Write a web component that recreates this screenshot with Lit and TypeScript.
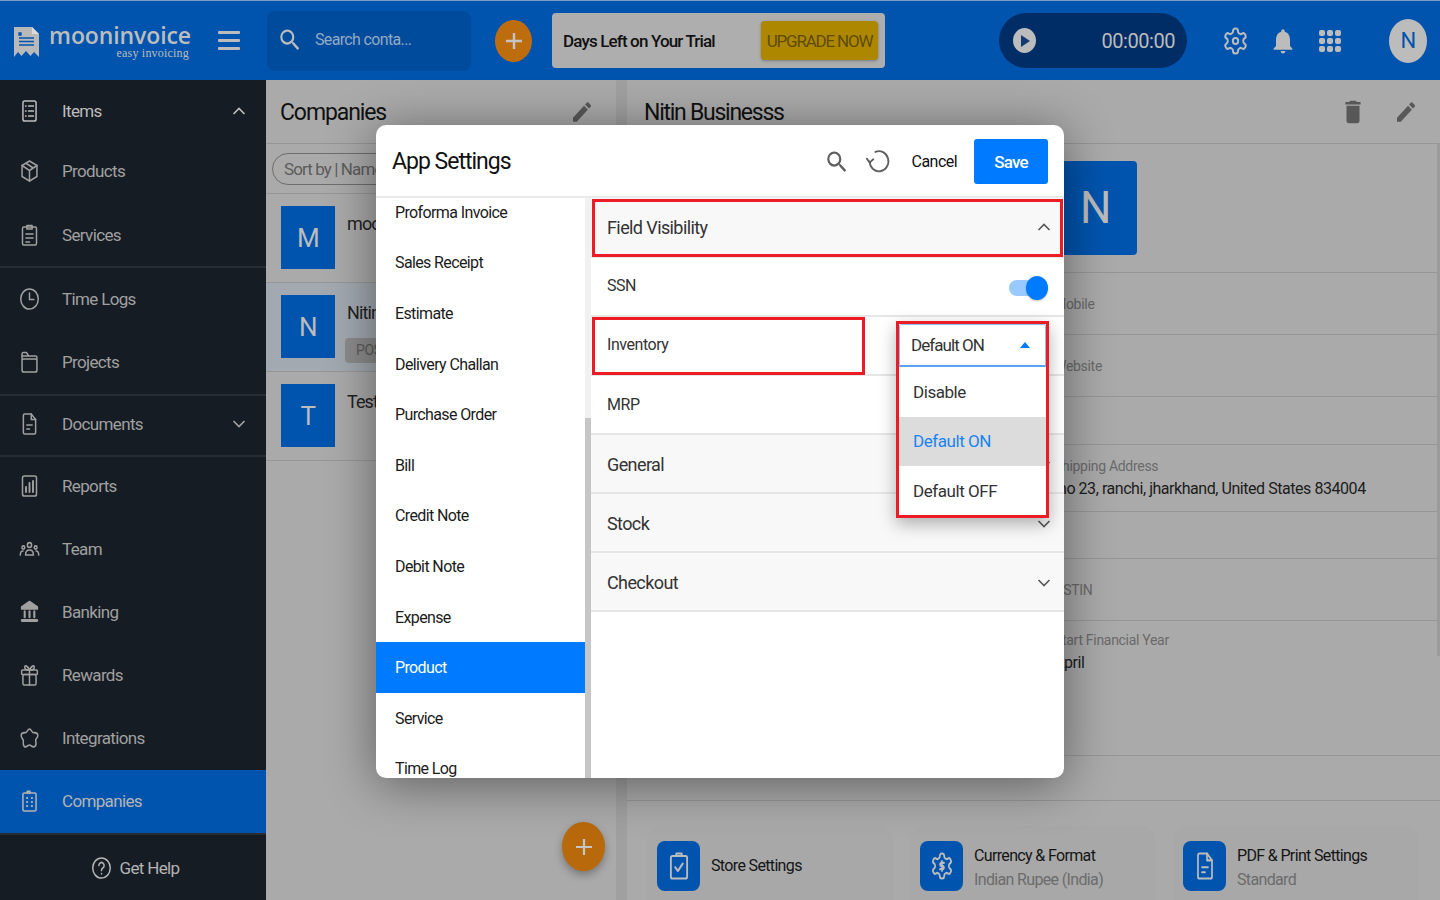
import { LitElement, html, css, svg } from 'lit';
import { customElement } from 'lit/decorators.js';

const line = (body: unknown, w = 24, h = 24) => html`
  <svg width=${w} height=${h} viewBox="0 0 24 24" preserveAspectRatio="none" fill="none" stroke="currentColor"
    stroke-width="1.7" stroke-linecap="round" stroke-linejoin="round">${body}</svg>`;

const solid = (d: string, w = 24, h = 24) => html`
  <svg width=${w} height=${h} viewBox="0 0 24 24" preserveAspectRatio="none" fill="currentColor"><path d=${d}></path></svg>`;

const SEARCH = 'M15.5 14h-.79l-.28-.27A6.471 6.471 0 0 0 16 9.5 6.5 6.5 0 1 0 9.5 16c1.61 0 3.09-.59 4.23-1.57l.27.28v.79l5 4.99L20.49 19l-4.99-5zm-6 0C7.01 14 5 11.99 5 9.5S7.01 5 9.5 5 14 7.01 14 9.5 11.99 14 9.5 14z';
const EDIT = 'M3 17.25V21h3.75L17.81 9.94l-3.75-3.75L3 17.25zM20.71 7.04a1 1 0 0 0 0-1.41l-2.34-2.34a1 1 0 0 0-1.41 0l-1.83 1.83 3.75 3.75 1.83-1.83z';
const TRASH = 'M6 19c0 1.1.9 2 2 2h8c1.1 0 2-.9 2-2V7H6v12zM19 4h-3.5l-1-1h-5l-1 1H5v2h14V4z';
const BELL = 'M12 22c1.1 0 2-.9 2-2h-4c0 1.1.9 2 2 2zm6-6v-5c0-3.07-1.63-5.64-4.5-6.32V4c0-.83-.67-1.5-1.5-1.5s-1.5.67-1.5 1.5v.68C7.64 5.36 6 7.92 6 11v5l-2 2v1h16v-1l-2-2z';
const GEAR_PATH = svg`<path d="M12.22 2h-.44a2 2 0 0 0-2 2v.18a2 2 0 0 1-1 1.73l-.43.25a2 2 0 0 1-2 0l-.15-.08a2 2 0 0 0-2.73.73l-.22.38a2 2 0 0 0 .73 2.73l.15.1a2 2 0 0 1 1 1.72v.51a2 2 0 0 1-1 1.74l-.15.09a2 2 0 0 0-.73 2.73l.22.38a2 2 0 0 0 2.73.73l.15-.08a2 2 0 0 1 2 0l.43.25a2 2 0 0 1 1 1.73V20a2 2 0 0 0 2 2h.44a2 2 0 0 0 2-2v-.18a2 2 0 0 1 1-1.73l.43-.25a2 2 0 0 1 2 0l.15.08a2 2 0 0 0 2.73-.73l.22-.39a2 2 0 0 0-.73-2.73l-.15-.08a2 2 0 0 1-1-1.74v-.5a2 2 0 0 1 1-1.74l.15-.09a2 2 0 0 0 .73-2.73l-.22-.38a2 2 0 0 0-2.73-.73l-.15.08a2 2 0 0 1-2 0l-.43-.25a2 2 0 0 1-1-1.73V4a2 2 0 0 0-2-2z"></path>`;
const FILE_PATH = svg`<path d="M5 3.5A1.5 1.5 0 0 1 6.5 2H14l5 5.5v13a1.5 1.5 0 0 1-1.5 1.5h-11A1.5 1.5 0 0 1 5 20.5z"></path><path d="M14 2v5.5h5M9 13h6M9 17h3"></path>`;

const chevron = (up: boolean) => html`
  <svg class="chev" width="14" height="10" viewBox="0 0 14 10" fill="none" stroke="currentColor" stroke-width="1.7">
    <path d=${up ? 'M1.5 8 7 2.5 12.5 8' : 'M1.5 2 7 7.5 12.5 2'}></path>
  </svg>`;

const NAV_ICONS: Record<string, unknown> = {
  items: svg`<rect x="4.5" y="2" width="15" height="20" rx="2"></rect><path d="M11 7h5.5M11 12h5.5M11 17h5.5M7.5 7h.5M7.5 12h.5M7.5 17h.5"></path>`,
  products: svg`<path d="M12 2 3.5 6.5v11L12 22l8.5-4.5v-11L12 2z"></path><path d="M3.5 6.5 12 11.5l8.5-5M12 11.5V22M8 4.3l8.3 4.8"></path>`,
  services: svg`<rect x="4" y="4" width="16" height="18" rx="1.5"></rect><path d="M9 2.5h6V6H9zM8 11h8M8 15h8M8 19h4"></path>`,
  time: svg`<circle cx="12" cy="12" r="10"></circle><path d="M12 6v6.5h5"></path>`,
  projects: svg`<path d="M3.5 9V4A1.5 1.5 0 0 1 5 2.5h3.5L11 6h8a1.5 1.5 0 0 1 1.5 1.5V9"></path><rect x="3.5" y="9" width="17" height="13" rx="2"></rect><path d="M3.5 6h7"></path>`,
  documents: FILE_PATH,
  reports: svg`<rect x="4" y="2" width="16" height="20" rx="2"></rect><path d="M8 18v-5M12 18V9M16 18V7" stroke-width="2.2"></path>`,
  team: svg`<circle cx="12" cy="8" r="2.4"></circle><path d="M7.5 18c0-3 1.8-5 4.5-5s4.5 2 4.5 5z"></path><circle cx="5" cy="10.5" r="1.6"></circle><circle cx="19" cy="10.5" r="1.6"></circle><path d="M1.5 18c0-2.5 1-4 3-4M22.5 18c0-2.5-1-4-3-4"></path>`,
  banking: svg`<path d="M12 1.5 3 7v2h18V7z" fill="currentColor"></path><path d="M6.5 11.5V17M12 11.5V17M17.5 11.5V17" stroke-width="2.4"></path><path d="M3.5 20.5h17" stroke-width="2.8"></path>`,
  rewards: svg`<rect x="3" y="7" width="18" height="4.5" rx="1"></rect><rect x="4.5" y="11.5" width="15" height="10.5" rx="1.5"></rect><path d="M12 7v15M12 7C10 3 6.5 1.5 6.5 4.5 6.5 6.5 9 7 12 7zM12 7c2-4 5.5-5.5 5.5-2.5C17.5 6.5 15 7 12 7z"></path>`,
  integrations: svg`<path d="M12 3C14 3 14.5 6 16 6.5S21 6 21.5 9 18.5 12.5 19 14.5 20.5 19 18 20.5 14 19 12 19 8 22 6 20.5 5 16 5 14.5 2 12 2.5 9 6.5 7 8 6.5 10 3 12 3z"></path>`,
  companies: svg`<rect x="4.5" y="4" width="15" height="18" rx="1.5"></rect><path d="M9.5 4V2.5h3V4M9 9h.5M14.5 9h.5M9 13h.5M14.5 13h.5M9 17h.5M14.5 17h.5" stroke-width="2"></path>`,
};

const NAV = [
  [['Items', 'items', 'up', 'items bright'], ['Products', 'products', '', 'products'], ['Services', 'services', '', 'services']],
  [['Time Logs', 'time', '', ''], ['Projects', 'projects', '', '']],
  [['Documents', 'documents', 'down', 'documents']],
  [['Reports', 'reports', '', 'reports'], ['Team', 'team', '', ''], ['Banking', 'banking', '', ''], ['Rewards', 'rewards', '', ''], ['Integrations', 'integrations', '', ''], ['Companies', 'companies', '', 'active']],
];

const COMPANIES = [
  { letter: 'M', name: 'moon', active: false, badge: false },
  { letter: 'N', name: 'Nitin', active: true, badge: true },
  { letter: 'T', name: 'Test', active: false, badge: false },
];

const INVOICE_TYPES = ['Proforma Invoice', 'Sales Receipt', 'Estimate', 'Delivery Challan', 'Purchase Order', 'Bill', 'Credit Note', 'Debit Note', 'Expense', 'Product', 'Service', 'Time Log'];

@customElement('app-root')
export class AppRoot extends LitElement {
  static styles = css`
    :host {
      display: block;
      width: 1440px;
      height: 900px;
      overflow: hidden;
      position: relative;
      font-family: Roboto, "Liberation Sans", sans-serif;
      letter-spacing: -0.45px;
      background: #aaaaaa;
    }

    svg { display: block; flex: none; }

    /* top bar */
    .topbar {
      height: 79px;
      border-top: 1px solid #7d9cc4;
      background: #0054ae;
      display: flex;
      align-items: center;
      color: #bcbcbc;
    }
    .brand {
      width: 266px;
      flex: none;
      display: flex;
      align-items: center;
      box-sizing: border-box;
      padding-left: 13px;
    }
    .brand > svg { margin-top: 2px; }
    .wordmark { margin-left: 10px; width: 141px; display: flex; flex-direction: column; align-items: flex-end; flex: none; }
    .wordmark b {
      font: 600 23px/24px "Open Sans", sans-serif;
      letter-spacing: -0.1px;
      color: #bdbdbd;
    }
    .wordmark span {
      font: 12px/12px "Liberation Serif", serif;
      letter-spacing: 0.2px;
      margin-right: 2px;
    }
    .burger { margin-left: 27px; display: flex; flex-direction: column; gap: 5px; }
    .burger i { display: block; width: 22px; height: 3px; background: #bcbcbc; border-radius: 1px; }
    .search {
      width: 204px;
      height: 60px;
      margin-left: 1px;
      flex: none;
      background: #004b9c;
      border-radius: 8px;
      display: flex;
      align-items: center;
      gap: 12px;
      padding: 0 0 2px 10px;
      box-sizing: border-box;
      font-size: 16px;
      letter-spacing: -0.65px;
      color: #93a9c4;
    }
    .search svg { color: #bcbcbc; }
    .add {
      flex: none;
      width: 37px;
      height: 42px;
      border-radius: 50%;
      background: #bd6d0e;
      color: #c4c4c4;
      margin-left: 24px;
      display: flex;
      align-items: center;
      justify-content: center;
    }
    .trial {
      flex: none;
      width: 333px;
      height: 55px;
      margin-left: 20px;
      background: #aeaeae;
      border-radius: 4px;
      box-sizing: border-box;
      padding: 0 7px 0 11px;
      display: flex;
      align-items: center;
      justify-content: space-between;
      font-size: 17px;
      font-weight: 500;
      letter-spacing: -0.85px;
      color: #111;
    }
    .upgrade {
      width: 117px;
      height: 39px;
      background: #ae8700;
      border-radius: 4px;
      box-shadow: 0 1px 3px rgba(0, 0, 0, 0.3);
      font-size: 17px;
      font-weight: 400;
      color: #5e4c06;
      display: flex;
      align-items: center;
      justify-content: center;
      white-space: nowrap;
      letter-spacing: -1.2px;
    }
    .timer {
      flex: none;
      width: 188px;
      height: 55px;
      margin-left: 114px;
      background: #002d66;
      border-radius: 28px;
      box-sizing: border-box;
      padding: 0 12px 0 14px;
      display: flex;
      align-items: center;
      justify-content: space-between;
      font-size: 20px;
      color: #bcbcbc;
    }
    .play {
      width: 23px;
      height: 25px;
      border-radius: 50%;
      background: #bcbcbc;
      display: flex;
      align-items: center;
      justify-content: center;
      color: #123a70;
    }
    .tools { display: flex; align-items: center; margin-left: 35px; gap: 20px; }
    .dots { display: grid; grid-template-columns: repeat(3, 6px); grid-auto-rows: 6px; gap: 2px; margin-left: 2px; }
    .dots i { background: #bcbcbc; border-radius: 2px; }
    .avatar {
      flex: none;
      width: 38px;
      height: 44px;
      margin-left: 48px;
      border-radius: 50%;
      background: #bcbcbc;
      color: #0054ae;
      font-size: 22px;
      display: flex;
      align-items: center;
      justify-content: center;
    }

    .layout { display: flex; height: 820px; }

    /* sidebar */
    .sidebar {
      width: 266px;
      flex: none;
      background: #161c24;
      color: #a0a0a0;
      display: flex;
      flex-direction: column;
      font-size: 17px;
      letter-spacing: -0.65px;
    }
    .group { border-bottom: 2px solid #282d34; }
    .group:last-of-type { border-bottom: 0; }
    .nav { height: 63px; display: flex; align-items: center; padding: 0 20px 2px 19px; box-sizing: border-box; }
    .nav.bright { color: #bdbdbd; }
    .nav.items { height: 62px; padding-bottom: 0; }
    .nav.products { height: 59px; }
    .nav.services { height: 65px; padding-top: 3px; padding-bottom: 0; }
    .nav.documents { height: 59px; padding-bottom: 3px; }
    .nav.reports { height: 61px; padding-bottom: 3px; }
    .nav.active { background: #0054ae; color: #b4b4b4; }
    .nav svg.ic { margin-right: 22px; }
    .nav .chev { margin-left: auto; }
    .help { flex: 1; display: flex; align-items: center; justify-content: center; gap: 8px; color: #b4b4b4; padding: 1px 0 0 4px; }

    /* list column */
    .list { width: 350px; flex: none; background: #aaaaaa; }
    .pane-head { height: 63px; border-bottom: 1px solid #969696; display: flex; align-items: center; font-size: 23px; letter-spacing: -1.1px; color: #111; }
    .pane-head span { padding-top: 2px; }
    .list .pane-head { padding: 0 22px 0 14px; justify-content: space-between; }
    .pane-head svg { color: #585858; }
    .sort { height: 49px; border-bottom: 1px solid #969696; display: flex; align-items: center; padding-left: 6px; }
    .sort span { border: 1px solid #6e6e6e; border-radius: 16px; height: 32px; width: 200px; display: flex; align-items: center; padding-left: 11px; box-sizing: border-box; font-size: 17px; letter-spacing: -0.9px; color: #5c5c5c; }
    .company { height: 89px; border-bottom: 1px solid #969696; display: flex; padding: 12px 0 0 15px; box-sizing: border-box; gap: 12px; }
    .company.on { background: #a2a9b0; }
    .tile { width: 54px; height: 63px; background: #0054ae; color: #bcbcbc; font-size: 26px; display: flex; align-items: center; justify-content: center; flex: none; }
    .name { font-size: 18px; line-height: 22px; letter-spacing: -0.9px; color: #222; margin-top: 7px; }
    .pos { width: 60px; height: 25px; background: #8c8c8c; border-radius: 4px; margin-top: 14px; margin-left: -2px; padding-left: 11px; box-sizing: border-box; font-size: 14px; line-height: 25px; color: #5c5c5c; }
    .fab-slot { display: flex; justify-content: flex-end; padding: 361px 11px 0 0; }
    .fab { width: 43px; height: 49px; border-radius: 50%; background: #b8690b; color: #c6c6c6; display: flex; align-items: center; justify-content: center; box-shadow: 0 4px 8px rgba(0, 0, 0, 0.3); }

    .gutter { width: 11px; flex: none; background: #a0a0a0; }

    /* details */
    .details { flex: 1; background: #aaaaaa; position: relative; }
    .details .pane-head { padding: 0 22px 0 17px; gap: 28px; letter-spacing: -1.26px; }
    .details .pane-head span { margin-right: auto; }
    .thumb { position: absolute; right: 0; top: 63px; width: 3px; height: 513px; background: #9a9a9a; }
    .hero { height: 129px; box-sizing: border-box; border-bottom: 1px solid #969696; padding: 17px 0 0 427px; }
    .hero div { width: 83px; height: 94px; background: #0054ae; border-radius: 4px; color: #bcbcbc; font-size: 44px; display: flex; align-items: center; justify-content: center; }
    .info { border-bottom: 1px solid #969696; padding-left: 427px; box-sizing: border-box; display: flex; flex-direction: column; justify-content: center; font-size: 14px; letter-spacing: -0.3px; color: #6a6a6a; }
    .info b { font-weight: 400; font-size: 16px; letter-spacing: -0.45px; color: #1c1c1c; margin: 5px 0 0 4px; }
    .h62 { height: 62px; }
    .h48 { height: 48px; }
    .h67 { height: 67px; }
    .h47 { height: 47px; }
    .h135 { height: 135px; justify-content: flex-start; padding-top: 11px; }
    .h45 { height: 45px; }
    .h135 b { margin-left: 0; }
    .cards { display: flex; gap: 17px; padding: 25px 0 0 20px; }
    .card { width: 246px; height: 74px; background: #a8a8a8; border-radius: 16px 16px 0 0; padding: 15px 0 0 10px; box-sizing: border-box; display: flex; gap: 11px; font-size: 16px; letter-spacing: -0.65px; color: #151515; }
    .card-ic { width: 43px; height: 50px; background: #0054ae; border-radius: 8px; color: #bcbcbc; display: flex; align-items: center; justify-content: center; flex: none; }
    .card p { margin: 0; height: 50px; box-sizing: border-box; display: flex; flex-direction: column; justify-content: center; padding-top: 2px; }
    .card p.single { padding: 0 0 2px; }
    .card small { font-size: 16px; color: #6c6c6c; margin-top: 5px; }

    /* modal */
    .backdrop { position: absolute; inset: 0; display: flex; align-items: flex-start; justify-content: center; padding-top: 125px; box-sizing: border-box; }
    .modal {
      width: 688px;
      height: 653px;
      background: #fff;
      border-radius: 10px;
      box-shadow: 0 6px 50px rgba(0, 0, 0, 0.45);
      display: flex;
      flex-direction: column;
      overflow: hidden;
      color: #1b1b1b;
    }
    .modal-head { height: 73px; flex: none; display: flex; align-items: center; padding: 2px 16px 0; border-bottom: 2px solid #eaeaea; box-sizing: border-box; color: #111; }
    .modal-head h2 { margin: 0 auto 0 0; font-size: 23px; font-weight: 400; letter-spacing: -1px; }
    .modal-head svg { color: #5e5e5e; }
    .cancel { font-size: 16px; letter-spacing: -0.55px; margin: 0 17px 0 21px; }
    .reload { margin-left: 16px; }
    .save { width: 74px; height: 45px; background: #007bff; color: #fff; border-radius: 3px; display: flex; align-items: center; justify-content: center; font-size: 17px; font-weight: 500; letter-spacing: -0.8px; }
    .modal-body { flex: 1; display: flex; min-height: 0; }
    .types { width: 209px; flex: none; overflow: hidden; font-size: 16px; letter-spacing: -0.62px; }
    .types div { height: 50.6px; display: flex; align-items: center; padding-left: 19px; }
    .types div:first-child { margin-top: -11px; }
    .types .on { background: #007bff; color: #fff; }
    .scroll { width: 6px; flex: none; background: #f1f1f1; display: flex; align-items: flex-end; }
    .scroll i { display: block; width: 100%; height: 360px; background: #c6c6c6; }
    .fields { flex: 1; font-size: 16px; color: #333; }
    .acc, .field { display: flex; align-items: center; justify-content: space-between; box-sizing: border-box; padding: 0 13px 0 16px; border-bottom: 2px solid #e6e6e6; height: 59px; }
    .acc { padding-top: 2px; background: #f8f8f8; font-size: 18px; letter-spacing: -0.6px; color: #333; }
    .acc.first { height: 60px; padding-top: 0; }
    .field { background: #fff; position: relative; }
    .field.up { padding-bottom: 2px; }
    .acc svg { color: #5a5a5a; }
    .mark { outline: 3px solid #ed1c24; outline-offset: -4px; }
    .inv-mark { position: absolute; left: 1px; top: 0; width: 273px; height: 58px; border: 3px solid #ed1c24; box-sizing: border-box; }
    .toggle { width: 39px; height: 16px; margin: 4px 3px 0 0; background: #99caff; border-radius: 8px; display: flex; justify-content: flex-end; align-items: center; }
    .toggle i { width: 22px; height: 24px; background: #007bff; border-radius: 50%; box-shadow: 0 1px 2px rgba(0, 0, 0, 0.25); }
    .select {
      position: absolute;
      right: 15px;
      top: 4px;
      width: 153px;
      height: 197px;
      box-sizing: border-box;
      border: 3px solid #ed1c24;
      background: #fff;
      box-shadow: 0 6px 16px rgba(0, 0, 0, 0.3);
      z-index: 2;
      font-size: 17px;
      color: #333;
    }
    .sel-head { height: 43px; box-sizing: border-box; border: 1px solid #8fc1f8; border-bottom: 2px solid #5aa4f5; border-radius: 2px 2px 0 0; padding: 0 15px 0 11px; display: flex; align-items: center; justify-content: space-between; letter-spacing: -0.95px; }
    .caret { width: 0; height: 0; border: 5px solid transparent; border-top: 0; border-bottom: 6px solid #007bff; }
    .opt { height: 49.5px; display: flex; align-items: center; padding-left: 14px; }
    .opt.on { background: #dcdcdc; color: #1a84f0; }
  `;

  render() {
    return html`
      <div class="topbar">
        <div class="brand">
          <svg width="27" height="31" viewBox="0 0 27 31">
            <path d="M1 1h18l7 7v23l-5-5-3.5 4-4.5-5-4.5 5L5 26l-4 5z" fill="#b9b9b9"></path>
            <path d="M19 1v7h7z" fill="#dcdcdc"></path>
            <path d="M6 7h2v2H6zM6 12h15M6 15.5h15M6 19h15" stroke="#0054ae" stroke-width="1.3" fill="#0054ae"></path>
          </svg>
          <div class="wordmark"><b>mooninvoice</b><span>easy invoicing</span></div>
          <div class="burger"><i></i><i></i><i></i></div>
        </div>
        <div class="search">${solid(SEARCH, 26, 28)}<span>Search conta...</span></div>
        <div class="add">
          <svg width="20" height="20" viewBox="0 0 20 20" stroke="currentColor" stroke-width="2.4"><path d="M10 2v16M2 10h16"></path></svg>
        </div>
        <div class="trial"><span>Days Left on Your Trial</span><div class="upgrade">UPGRADE NOW</div></div>
        <div class="timer">
          <div class="play"><svg width="10" height="12" viewBox="0 0 10 12" fill="currentColor"><path d="M1 0l9 6-9 6z"></path></svg></div>
          <span>00:00:00</span>
        </div>
        <div class="tools">
          ${line(svg`${GEAR_PATH}<circle cx="12" cy="12" r="2.4"></circle>`, 27, 30)}
          ${solid(BELL, 28, 30)}
          <div class="dots">${Array.from({ length: 9 }, () => html`<i></i>`)}</div>
        </div>
        <div class="avatar">N</div>
      </div>

      <div class="layout">
        <nav class="sidebar">
          ${NAV.map(group => html`
            <div class="group">
              ${group.map(([label, icon, chev, cls]) => html`
                <div class="nav ${cls}">
                  <svg class="ic" width="21" height="24" viewBox="0 0 24 24" preserveAspectRatio="none" fill="none" stroke="currentColor" stroke-width="1.7" stroke-linecap="round" stroke-linejoin="round">${NAV_ICONS[icon]}</svg>
                  <span>${label}</span>
                  ${chev ? chevron(chev === 'up') : ''}
                </div>
              `)}
            </div>
          `)}
          <div class="help">
            ${line(svg`<circle cx="12" cy="12" r="10"></circle><path d="M9 9.5a3 3 0 1 1 4.5 2.6c-1 .6-1.5 1.2-1.5 2.4"></path><path d="M12 17.5v.3"></path>`, 21, 24)}
            <span>Get Help</span>
          </div>
        </nav>

        <section class="list">
          <div class="pane-head"><span>Companies</span>${solid(EDIT, 24, 26)}</div>
          <div class="sort"><span>Sort by | Name</span></div>
          ${COMPANIES.map(c => html`
            <div class="company ${c.active ? 'on' : ''}">
              <div class="tile">${c.letter}</div>
              <div>
                <div class="name">${c.name}</div>
                ${c.badge ? html`<div class="pos">POS</div>` : ''}
              </div>
            </div>
          `)}
          <div class="fab-slot">
            <div class="fab"><svg width="18" height="18" viewBox="0 0 18 18" stroke="currentColor" stroke-width="2.2"><path d="M9 1v16M1 9h16"></path></svg></div>
          </div>
        </section>
        <div class="gutter"></div>

        <section class="details">
          <div class="pane-head"><span>Nitin Businesss</span>${solid(TRASH, 26, 30)}${solid(EDIT, 24, 26)}</div>
          <div class="thumb"></div>
          <div class="hero"><div>N</div></div>
          <div class="info h62">Mobile</div>
          <div class="info h62">Website</div>
          <div class="info h48"></div>
          <div class="info h67"><span>Shipping Address</span><b>no 23, ranchi, jharkhand, United States 834004</b></div>
          <div class="info h47"></div>
          <div class="info h62">GSTIN</div>
          <div class="info h135"><span>Start Financial Year</span><b>April</b></div>
          <div class="info h45"></div>
          <div class="cards">
            <div class="card">
              <div class="card-ic">${line(svg`<rect x="4.5" y="4" width="15" height="18" rx="1.5"></rect><path d="M9.5 4V2h5v2M8.5 13l2.5 3 4.5-6"></path>`, 26, 30)}</div>
              <p class="single">Store Settings</p>
            </div>
            <div class="card">
              <div class="card-ic">${line(svg`${GEAR_PATH}<path d="M12 8v8M14 9.5h-3a1.3 1.3 0 0 0 0 2.5h2a1.3 1.3 0 0 1 0 2.5h-3"></path>`, 24, 30)}</div>
              <p>Currency &amp; Format<small>Indian Rupee (India)</small></p>
            </div>
            <div class="card">
              <div class="card-ic">${line(FILE_PATH, 24, 30)}</div>
              <p>PDF &amp; Print Settings<small>Standard</small></p>
            </div>
          </div>
        </section>
      </div>

      <div class="backdrop">
        <div class="modal">
          <div class="modal-head">
            <h2>App Settings</h2>
            ${solid(SEARCH, 26, 28)}
            <span class="reload">${line(svg`<path d="M9 3.5A9 9 0 1 1 3.5 12"></path><path d="M.8 9.5 3.5 13 7 10"></path>`, 25, 27)}</span>
            <span class="cancel">Cancel</span>
            <div class="save">Save</div>
          </div>
          <div class="modal-body">
            <div class="types">
              ${INVOICE_TYPES.map(t => html`<div class=${t === 'Product' ? 'on' : ''}>${t}</div>`)}
            </div>
            <div class="scroll"><i></i></div>
            <div class="fields">
              <div class="acc first mark"><span>Field Visibility</span>${chevron(true)}</div>
              <div class="field up"><span>SSN</span><div class="toggle"><i></i></div></div>
              <div class="field up">
                <span>Inventory</span>
                <div class="inv-mark"></div>
                <div class="select">
                  <div class="sel-head"><span>Default ON</span><div class="caret"></div></div>
                  <div class="opt">Disable</div>
                  <div class="opt on">Default ON</div>
                  <div class="opt">Default OFF</div>
                </div>
              </div>
              <div class="field"><span>MRP</span></div>
              <div class="acc"><span>General</span>${chevron(false)}</div>
              <div class="acc"><span>Stock</span>${chevron(false)}</div>
              <div class="acc"><span>Checkout</span>${chevron(false)}</div>
            </div>
          </div>
        </div>
      </div>
    `;
  }
}
